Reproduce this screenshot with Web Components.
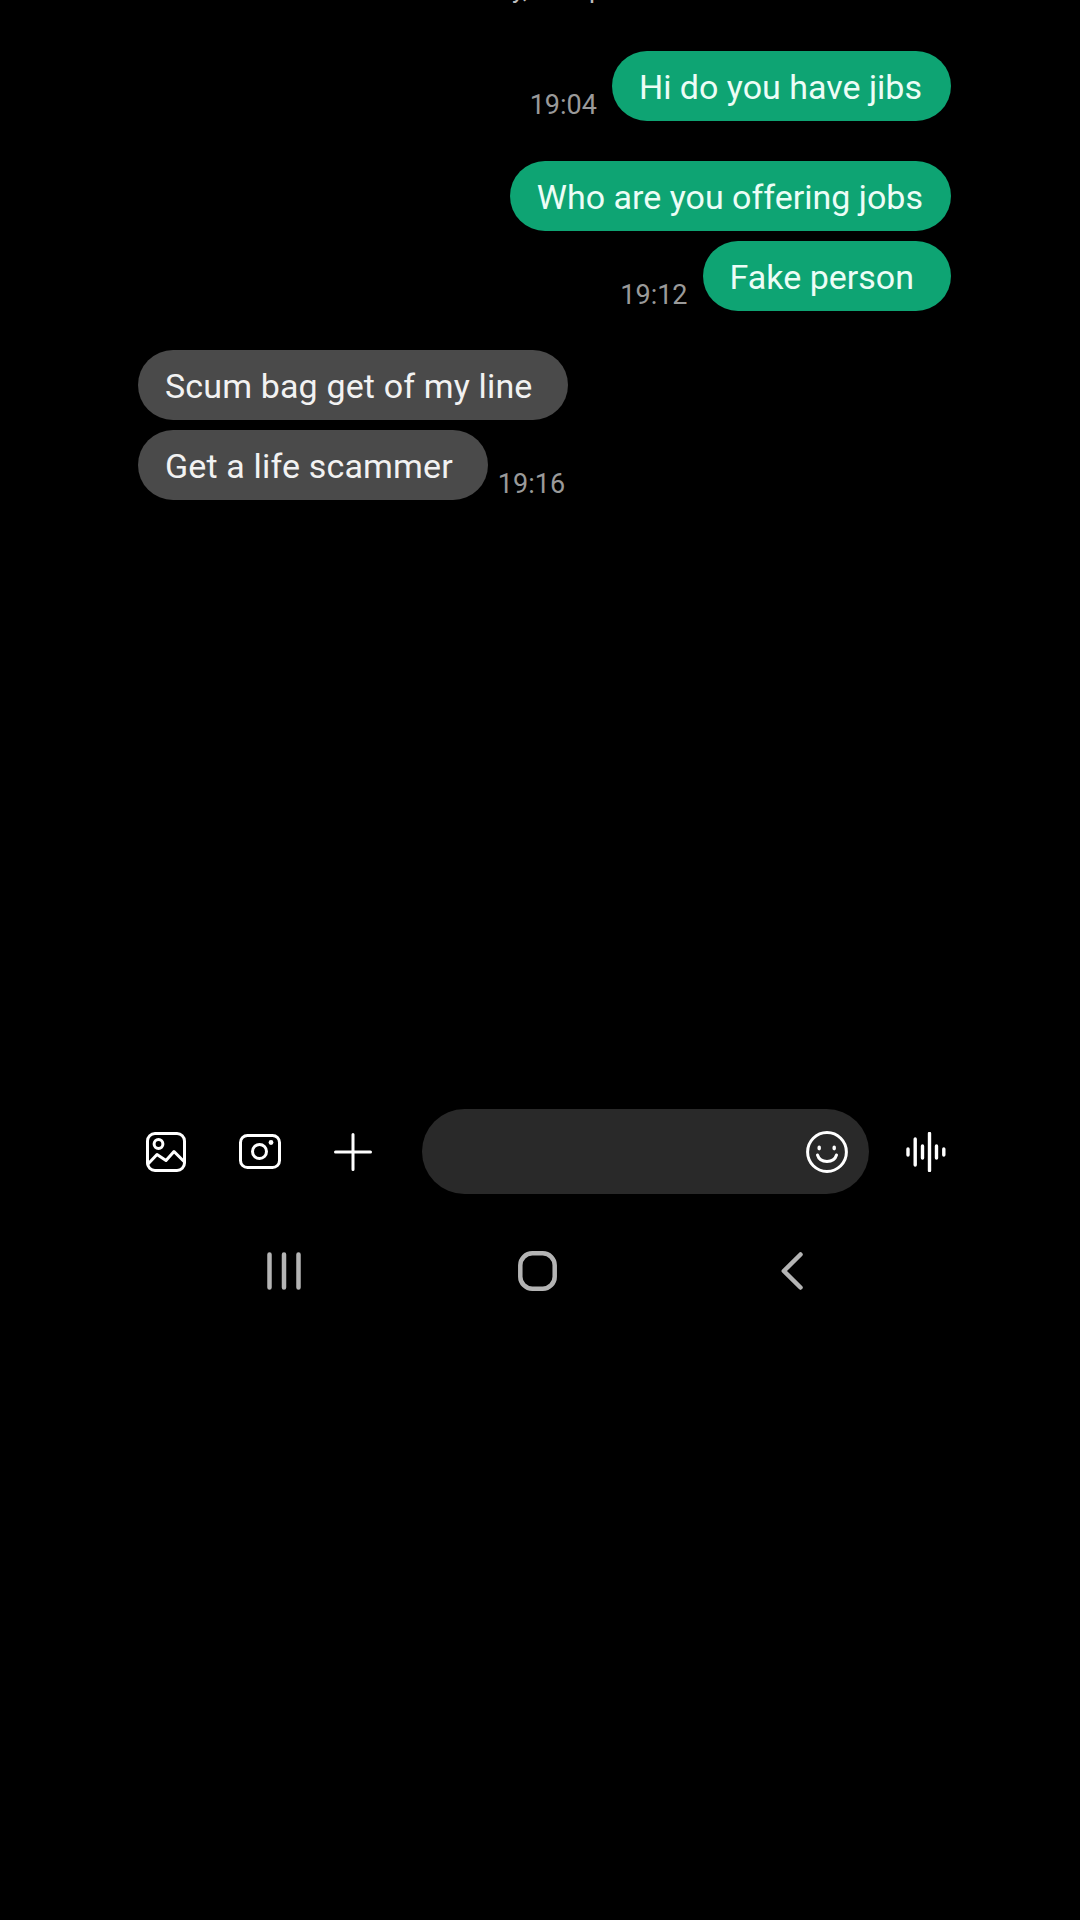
<!DOCTYPE html>
<html>
<head>
<meta charset="utf-8">
<style>
  html, body { margin: 0; background: #000; }
</style>
</head>
<body>
<chat-screen>
  <date-stub>y, &nbsp;p</date-stub>
  <chat-bubble kind="sent" time="19:04" style="margin-top:47px;--pad-r:29px">Hi do you have jibs</chat-bubble>
  <chat-bubble kind="sent" style="margin-top:40px;--pad-r:28px">Who are you offering jobs</chat-bubble>
  <chat-bubble kind="sent" time="19:12" style="margin-top:10px;--pad-r:37px">Fake person</chat-bubble>
  <chat-bubble kind="received" style="margin-top:39px;--pad-r:35px">Scum bag get of my line</chat-bubble>
  <chat-bubble kind="received" time="19:16" style="margin-top:10px;--pad-r:35px">Get a life scammer</chat-bubble>
  <chat-composer slot="composer"></chat-composer>
  <nav-bar slot="nav"></nav-bar>
</chat-screen>

<script>
class ChatScreen extends HTMLElement {
  constructor() {
    super();
    this.attachShadow({ mode: 'open' });
    this.shadowRoot.innerHTML = `
      <style>
        :host { display: block; width: 1080px; height: 1920px; overflow: hidden; background: #000; }
        .thread { height: 1109px; padding: 0 129px 0 138px; box-sizing: border-box; display: flex; flex-direction: column; }
      </style>
      <div class="thread"><slot></slot></div>
      <slot name="composer"></slot>
      <slot name="nav"></slot>
    `;
  }
}

// only the bottom of the date line is on screen, the rest is scrolled off
class DateStub extends HTMLElement {
  constructor() {
    super();
    this.attachShadow({ mode: 'open' });
    this.shadowRoot.innerHTML = `
      <style>
        :host { display: block; height: 4px; overflow: hidden; position: relative; }
        span { position: absolute; left: 374px; bottom: 0; font: 26px/30px Roboto, sans-serif; color: #bdbdbd; white-space: pre; word-spacing: 24px; }
      </style>
      <span><slot></slot></span>
    `;
  }
}

class ChatBubble extends HTMLElement {
  constructor() {
    super();
    this.attachShadow({ mode: 'open' });
    this.shadowRoot.innerHTML = `
      <style>
        :host { display: flex; justify-content: flex-end; align-items: flex-end; gap: 15px; }
        :host([kind="received"]) { flex-direction: row-reverse; gap: 10px; }
        .text {
          height: 70px; padding: 1px var(--pad-r, 27px) 0 27px; border-radius: 35px; box-sizing: border-box;
          display: flex; align-items: center;
          font: 34px Roboto, sans-serif; color: #ecfdf6; white-space: nowrap;
          background: #0ea473;
        }
        :host([kind="received"]) .text { background: #4a4a4a; color: #f2f2f2; letter-spacing: .15px; }
        .time { font: 27px/30px Roboto, sans-serif; color: #9a9a9a; margin-bottom: 1px; }
        .time:empty { display: none; }
      </style>
      <span class="time"></span>
      <div class="text"><slot></slot></div>
    `;
  }
  connectedCallback() {
    this.shadowRoot.querySelector('.time').textContent = this.getAttribute('time') || '';
  }
}

class ChatComposer extends HTMLElement {
  constructor() {
    super();
    this.attachShadow({ mode: 'open' });
    this.shadowRoot.innerHTML = `
      <style>
        :host { display: flex; align-items: center; height: 85px; padding-left: 144px; }
        svg { display: block; fill: none; stroke: #fff; stroke-width: 3; stroke-linecap: round; stroke-linejoin: round; }
        .icon { width: 44px; display: flex; justify-content: center; margin-right: 49px; }
        .field {
          width: 447px; height: 85px; border-radius: 43px; background: #292929; box-sizing: border-box;
          display: flex; align-items: center; justify-content: flex-end; padding-right: 21px;
        }
        .voice { margin: 0 0 0 35px; }
      </style>
      <div class="icon" style="margin-right:50px">
        <svg width="40" height="40" viewBox="0 0 40 40">
          <rect x="1.5" y="1.5" width="37" height="37" rx="7.5"/>
          <circle cx="12.5" cy="12" r="4.4"/>
          <path d="M2 32 11 22.5 20 28.5 28 19.5 38 29.5"/>
        </svg>
      </div>
      <div class="icon">
        <svg width="42" height="35" viewBox="0 0 42 35">
          <rect x="1.5" y="1.5" width="39" height="32" rx="7"/>
          <circle cx="20.5" cy="17.5" r="7"/>
          <circle cx="32" cy="8.5" r="2.4" fill="#fff" stroke="none"/>
        </svg>
      </div>
      <div class="icon" style="margin-right:47px">
        <svg width="38" height="38" viewBox="0 0 38 38">
          <path d="M19 1.5V36.5M1.5 19H36.5"/>
        </svg>
      </div>
      <div class="field">
        <svg width="42" height="42" viewBox="0 0 42 42">
          <circle cx="21" cy="21" r="19.4"/>
          <ellipse cx="13.2" cy="17" rx="1.8" ry="2.4" fill="#fff" stroke="none"/>
          <ellipse cx="28.2" cy="17" rx="1.8" ry="2.4" fill="#fff" stroke="none"/>
          <path d="M11.5 24C14 32.5 28 32.5 30.5 24"/>
        </svg>
      </div>
      <div class="icon voice">
        <svg width="42" height="40" viewBox="0 0 42 40" style="stroke-width:3.4">
          <path d="M3 17V23M10.2 7V33M17.5 14V26M24.5 1.5V38.5M31.5 14V26M38.8 17V23"/>
        </svg>
      </div>
    `;
  }
}

class NavBar extends HTMLElement {
  constructor() {
    super();
    this.attachShadow({ mode: 'open' });
    this.shadowRoot.innerHTML = `
      <style>
        :host { display: flex; justify-content: center; align-items: center; padding: 57px 5px 0 0; }
        .slot { width: 254px; display: flex; justify-content: center; }
        svg { display: block; fill: none; stroke: #b4b4b4; stroke-width: 4.5; stroke-linecap: round; stroke-linejoin: round; }
      </style>
      <div class="slot">
        <svg width="34" height="38" viewBox="0 0 34 38"><path d="M2.5 2.5V35.5M17 2.5V35.5M31.5 2.5V35.5"/></svg>
      </div>
      <div class="slot">
        <svg width="39" height="40" viewBox="0 0 39 40"><rect x="2.3" y="2.3" width="34.4" height="35.4" rx="12"/></svg>
      </div>
      <div class="slot">
        <svg width="22" height="38" viewBox="0 0 22 38"><path d="M19.5 2.5 2.8 19 19.5 35.5"/></svg>
      </div>
    `;
  }
}

customElements.define('chat-screen', ChatScreen);
customElements.define('date-stub', DateStub);
customElements.define('chat-bubble', ChatBubble);
customElements.define('chat-composer', ChatComposer);
customElements.define('nav-bar', NavBar);
</script>
</body>
</html>
